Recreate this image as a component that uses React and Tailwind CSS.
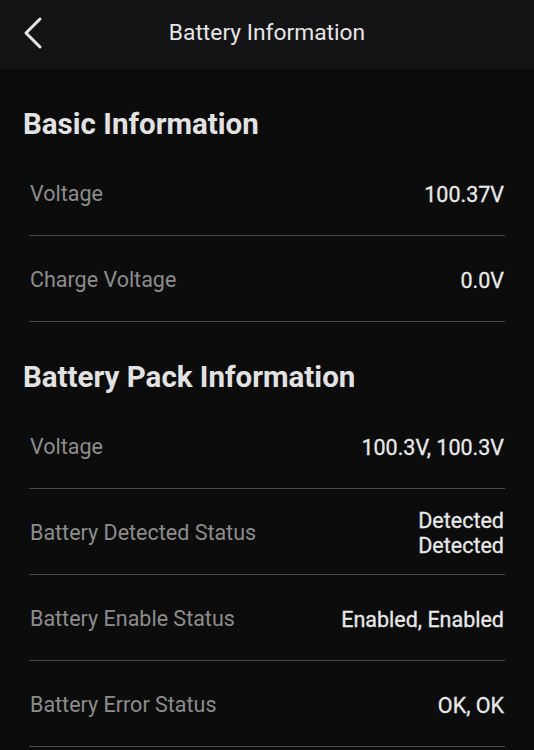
import React from "react";

// static readout, values come from the BMS poll in the real app
const sections = [
  {
    title: "Basic Information",
    rows: [
      { label: "Voltage", value: ["100.37V"] },
      { label: "Charge Voltage", value: ["0.0V"] },
    ],
  },
  {
    title: "Battery Pack Information",
    rows: [
      { label: "Voltage", value: ["100.3V, 100.3V"] },
      { label: "Battery Detected Status", value: ["Detected", "Detected"] },
      { label: "Battery Enable Status", value: ["Enabled, Enabled"] },
      { label: "Battery Error Status", value: ["OK, OK"] },
    ],
  },
];

const Row = ({ label, value }) => (
  <div className="flex h-[86px] items-center justify-between border-b border-[#4a4a4a] pt-[3px] pl-px pr-px">
    <span className="text-[21.5px] text-[#8c8c8c]">{label}</span>
    <div className="flex flex-col items-end text-[21.5px] leading-[25px] text-[#e8e8e8] [-webkit-text-stroke:0.3px_#e8e8e8]">
      {value.map((v, i) => (
        <span key={i}>{v}</span>
      ))}
    </div>
  </div>
);

export default function App() {
  return (
    <div
      className="min-h-[750px] w-full bg-[#0c0c0c]"
      style={{ fontFamily: "Roboto, 'Noto Sans', sans-serif" }}
    >
      {/* Top bar */}
      <div className="relative flex h-[69px] items-center justify-center bg-[#141416]">
        <button className="absolute left-[20px] top-[16px] p-0">
          <svg width="24" height="34" viewBox="0 0 24 34" fill="none">
            <path d="M20 3 L6 17 L20 31" stroke="#e6e6e6" strokeWidth="3" strokeLinecap="round" strokeLinejoin="round" />
          </svg>
        </button>
        <h1 className="-mt-[3px] text-[22.8px] text-[#e6e6e6]">Battery Information</h1>
      </div>

      {/* Sections */}
      <div className="px-[29px]">
        {sections.map((s) => (
          <div key={s.title}>
            <h2 className="-ml-[6px] pt-[41px] pb-[12px] text-[29.5px] leading-[28px] font-bold text-[#e2e2e2]">
              {s.title}
            </h2>
            {s.rows.map((r) => (
              <Row key={r.label + s.title} label={r.label} value={r.value} />
            ))}
          </div>
        ))}
      </div>
    </div>
  );
}
